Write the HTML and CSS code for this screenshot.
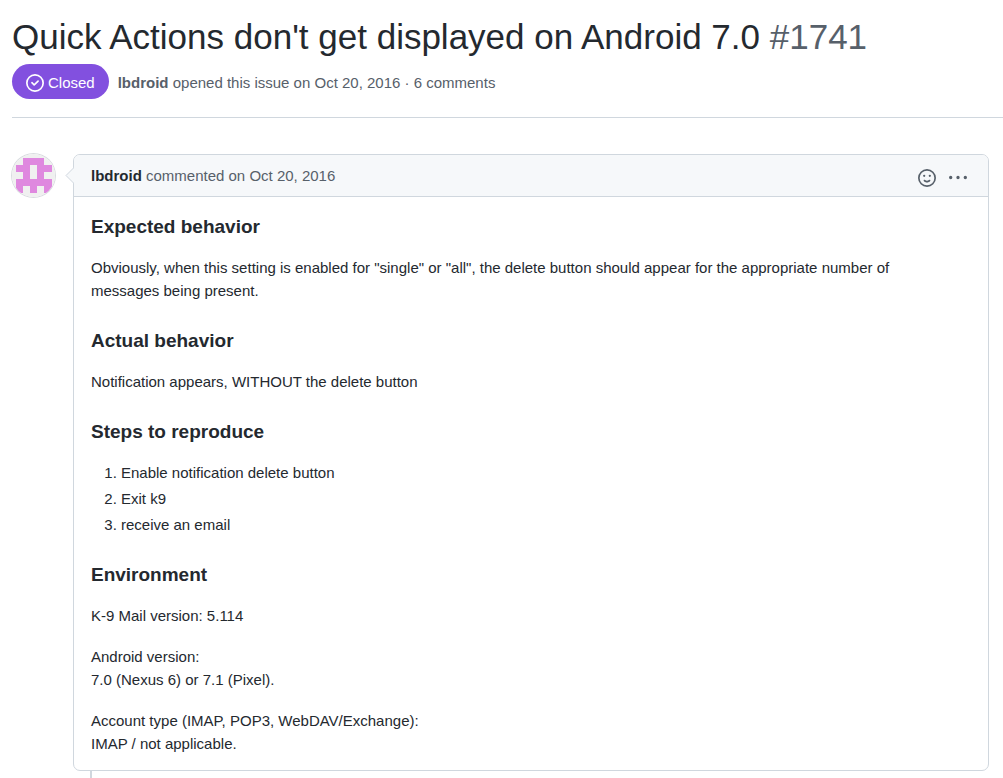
FILE: index.html
```html
<!DOCTYPE html>
<html lang="en">
<head>
<meta charset="utf-8">
<title>Quick Actions don't get displayed on Android 7.0 · Issue #1741</title>
<link rel="stylesheet" href="styles.css">
</head>
<body>
<header class="issue-header">
  <h1 class="issue-title">Quick Actions don't get displayed on Android 7.0 <span class="issue-number">#1741</span></h1>
  <div class="issue-meta">
    <span class="state">
      <svg class="icon" viewBox="0 0 16 16" aria-hidden="true"><path d="M11.28 6.78a.75.75 0 0 0-1.06-1.06L7.25 8.69 5.78 7.22a.75.75 0 0 0-1.06 1.06l2 2a.75.75 0 0 0 1.06 0l3.5-3.5Z"/><path d="M16 8A8 8 0 1 1 0 8a8 8 0 0 1 16 0Zm-1.5 0a6.5 6.5 0 1 0-13 0 6.5 6.5 0 0 0 13 0Z"/></svg>
      Closed
    </span>
    <p class="opened"><a class="author" href="#lbdroid">lbdroid</a> opened this issue on Oct 20, 2016 · 6 comments</p>
  </div>
</header>
<main class="timeline">
  <a class="avatar" href="#lbdroid" aria-label="lbdroid">
    <svg viewBox="0 0 43 43" aria-hidden="true"><rect width="43" height="43" fill="#f0f0f0"/><path fill="#df88df" fill-rule="evenodd" d="M11 4h21v7h8v7h-8v7h8v14h-8v-7h-7v7h-7v-7h-7v7H4V25h7v-7H4v-7h7zM18 11v14h7V11z"/></svg>
  </a>
  <div class="thread">
    <article class="comment">
      <svg class="caret" viewBox="0 0 9 17" aria-hidden="true"><path d="M9 0.5 L1 8.5 L9 16.5"/></svg>
      <header class="comment-header">
        <p class="comment-meta"><a class="author author-dark" href="#lbdroid">lbdroid</a> commented on Oct 20, 2016</p>
        <button class="icon-button" type="button" aria-label="Add a reaction"><svg class="icon" viewBox="0 0 16 16" aria-hidden="true"><path d="M8 0a8 8 0 1 1 0 16A8 8 0 0 1 8 0ZM1.5 8a6.5 6.5 0 1 0 13 0 6.5 6.5 0 0 0-13 0Zm3.82 1.64a.75.75 0 0 1 1.04.17l.02.02c.34.4.96.67 1.62.67.68 0 1.28-.27 1.62-.67l.02-.02a.75.75 0 0 1 1.23.86C10.22 11.51 9.12 12 8 12s-2.22-.49-2.87-1.33a.75.75 0 0 1 .19-1.03ZM11.5 6a1 1 0 1 1-2 0 1 1 0 0 1 2 0ZM5.5 7a1 1 0 1 1 0-2 1 1 0 0 1 0 2Z"/></svg></button>
        <button class="icon-button" type="button" aria-label="Show options"><svg class="icon" viewBox="0 0 16 16" aria-hidden="true"><path d="M8 9a1.5 1.5 0 1 0 0-3 1.5 1.5 0 0 0 0 3ZM1.5 9a1.5 1.5 0 1 0 0-3 1.5 1.5 0 0 0 0 3Zm13 0a1.5 1.5 0 1 0 0-3 1.5 1.5 0 0 0 0 3Z"/></svg></button>
      </header>
      <div class="comment-body">
        <h2>Expected behavior</h2>
        <p>Obviously, when this setting is enabled for "single" or "all", the delete button should appear for the appropriate number of messages being present.</p>
        <h2>Actual behavior</h2>
        <p>Notification appears, WITHOUT the delete button</p>
        <h2>Steps to reproduce</h2>
        <ol>
          <li>Enable notification delete button</li>
          <li>Exit k9</li>
          <li>receive an email</li>
        </ol>
        <h2>Environment</h2>
        <p>K-9 Mail version: 5.114</p>
        <p>Android version:<br>7.0 (Nexus 6) or 7.1 (Pixel).</p>
        <p>Account type (IMAP, POP3, WebDAV/Exchange):<br>IMAP / not applicable.</p>
      </div>
    </article>
    <div class="connector"></div>
  </div>
</main>
</body>
</html>
```
FILE: styles.css
```css
* { box-sizing: border-box; }
body {
  margin: 0;
  padding: 16px 0 0 12px;
  background: #fff;
  color: #24292f;
  font: 15px/23px "Liberation Sans", Arial, sans-serif;
}
h1, h2, p, ol { margin: 0; }
a { color: inherit; text-decoration: none; }
.icon { display: block; width: 18px; height: 18px; fill: currentColor; }
.issue-header { padding-bottom: 18px; border-bottom: 1px solid #d0d7de; color: #57606a; }
.issue-title { color: #24292f; font-size: 35px; font-weight: 400; line-height: 42px; margin-bottom: 6px; }
.issue-number { color: #57606a; }
.issue-meta { display: flex; align-items: center; gap: 9px; }
.state { display: flex; align-items: center; gap: 4px; height: 35px; padding: 2px 14px 0; border-radius: 18px; background: #8250df; color: #fff; }
.opened { padding-top: 2px; }
.author { font-weight: 700; }
.author-dark { color: #24292f; }
.timeline { display: flex; align-items: flex-start; gap: 18px; padding: 36px 14px 0 0; }
.avatar { flex: none; width: 43px; height: 43px; border-radius: 50%; overflow: hidden; box-shadow: 0 0 0 1px #d9dce0; }
.avatar svg { display: block; }
.thread { flex: 1; min-width: 0; }
.comment { position: relative; border: 1px solid #d0d7de; border-radius: 7px; background: #fff; }
.caret { position: absolute; top: 12px; left: -9px; width: 9px; height: 17px; fill: #f6f8fa; stroke: #d0d7de; }
.comment-header { display: flex; align-items: center; gap: 13px; padding: 9px 21px 9px 17px; border-bottom: 1px solid #d0d7de; border-radius: 6px 6px 0 0; background: #f6f8fa; color: #57606a; }
.comment-meta { flex: 1; }
.icon-button { padding: 4px 0 0; border: 0; background: none; color: #57606a; }
.comment-body { padding: 18px 28px 15px 17px; }
.comment-body h2 { margin: 27px 0 18px; font-size: 19px; line-height: 23px; }
.comment-body h2:first-child { margin-top: 0; }
.comment-body p + p { margin-top: 18px; }
.comment-body ol { padding-left: 30px; }
.comment-body li + li { margin-top: 3px; }
.connector { width: 2px; height: 20px; margin-left: 17px; background: #d0d7de; }
```
